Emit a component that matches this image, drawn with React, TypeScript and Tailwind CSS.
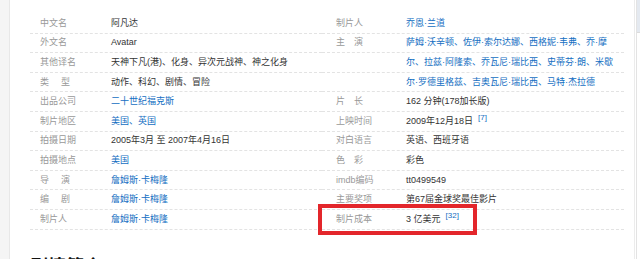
import React from "react";

type Part = { t: string; link?: boolean; sup?: string };
type Row = { label?: React.ReactNode; parts: Part[] };

const L = (a: string, b: string, gap: string) => (
  <>
    <span>{a}</span>
    <span className={gap}>{b}</span>
  </>
);

const leftRows: Row[] = [
  { label: "中文名", parts: [{ t: "阿凡达" }] },
  { label: "外文名", parts: [{ t: "Avatar" }] },
  { label: "其他译名", parts: [{ t: "天神下凡(港)、化身、异次元战神、神之化身" }] },
  { label: L("类", "型", "ml-[12px]"), parts: [{ t: "动作、科幻、剧情、冒险" }] },
  { label: "出品公司", parts: [{ t: "二十世纪福克斯", link: true }] },
  { label: "制片地区", parts: [{ t: "美国、英国", link: true }] },
  { label: "拍摄日期", parts: [{ t: "2005年3月 至 2007年4月16日" }] },
  { label: "拍摄地点", parts: [{ t: "美国", link: true }] },
  { label: L("导", "演", "ml-[12px]"), parts: [{ t: "詹姆斯·卡梅隆", link: true }] },
  { label: L("编", "剧", "ml-[12px]"), parts: [{ t: "詹姆斯·卡梅隆", link: true }] },
  { label: "制片人", parts: [{ t: "詹姆斯·卡梅隆", link: true }] },
];

const rightRows: Row[] = [
  { label: "制片人", parts: [{ t: "乔恩·兰道", link: true }] },
  { label: L("主", "演", "ml-[9px]"), parts: [{ t: "萨姆·沃辛顿、佐伊·索尔达娜、西格妮·韦弗、乔·摩", link: true }] },
  { parts: [{ t: "尔、拉兹·阿隆索、乔瓦尼·瑞比西、史蒂芬·朗、米歇", link: true }] },
  { parts: [{ t: "尔·罗德里格兹、吉奥瓦尼·瑞比西、马特·杰拉德", link: true }] },
  { label: L("片", "长", "ml-[9px]"), parts: [{ t: "162 分钟(178加长版)" }] },
  { label: "上映时间", parts: [{ t: "2009年12月18日", sup: "[7]" }] },
  { label: "对白语言", parts: [{ t: "英语、西班牙语" }] },
  { label: L("色", "彩", "ml-[9px]"), parts: [{ t: "彩色" }] },
  { label: "imdb编码", parts: [{ t: "tt0499549" }] },
  { label: "主要奖项", parts: [{ t: "第67届金球奖最佳影片" }] },
  { label: "制片成本", parts: [{ t: "3 亿美元", sup: "[32]" }] },
];

function Column({ rows, pad, labelW, width }: { rows: Row[]; pad: string; labelW: string; width: string }) {
  return (
    <div className={`${width} flex flex-col`}>
      {rows.map((r, i) => (
        <div
          key={i}
          className={`h-[19.6px] box-border border-b border-dashed border-[#e3e3e3] flex items-center ${pad}`}
        >
          <div className={`${labelW} shrink-0 text-[#999999] whitespace-nowrap`}>{r.label}</div>
          <div className="whitespace-nowrap text-[#333333]">
            {r.parts.map((p, j) => (
              <span key={j}>
                <span className={p.link ? "text-[#136ec2]" : ""}>{p.t}</span>
                {p.sup && (
                  <span className="relative -top-[4px] ml-[5px] text-[8px] text-[#136ec2]">{p.sup}</span>
                )}
              </span>
            ))}
          </div>
        </div>
      ))}
    </div>
  );
}

export default function App() {
  return (
    <div
      className="flex w-[640px] h-[259px] overflow-hidden bg-white text-[9px] leading-none"
      style={{ fontFamily: '"Liberation Sans", "Noto Sans CJK SC", sans-serif' }}
    >
      <div className="w-[10px] shrink-0 bg-[#f5f5f5] border-r border-[#e8e8e8]" />
      <main className="relative w-[625px] shrink-0 border-r border-[#ececec] pl-[20px] pt-[14px]">
        <div className="flex">
          <Column rows={leftRows} pad="pl-[10px]" labelW="w-[71px]" width="w-[292px]" />
          <Column rows={rightRows} pad="pl-[14px]" labelW="w-[70px]" width="w-[302px]" />
        </div>
        <h2 className="mt-[26px] text-[18px] leading-[22px] font-bold text-[#111111]">剧情简介</h2>
        <div className="absolute left-[308px] top-[204px] w-[159px] h-[31px] border-4 border-[#e3262b]" />
      </main>
      <aside className="flex-1 pl-[1px]">
        <div className="h-full border-l border-[#e3e3e3]">
          <div className="h-[33px] bg-[#e4e9f0] border-b border-[#dcdcdc]" />
        </div>
      </aside>
    </div>
  );
}
